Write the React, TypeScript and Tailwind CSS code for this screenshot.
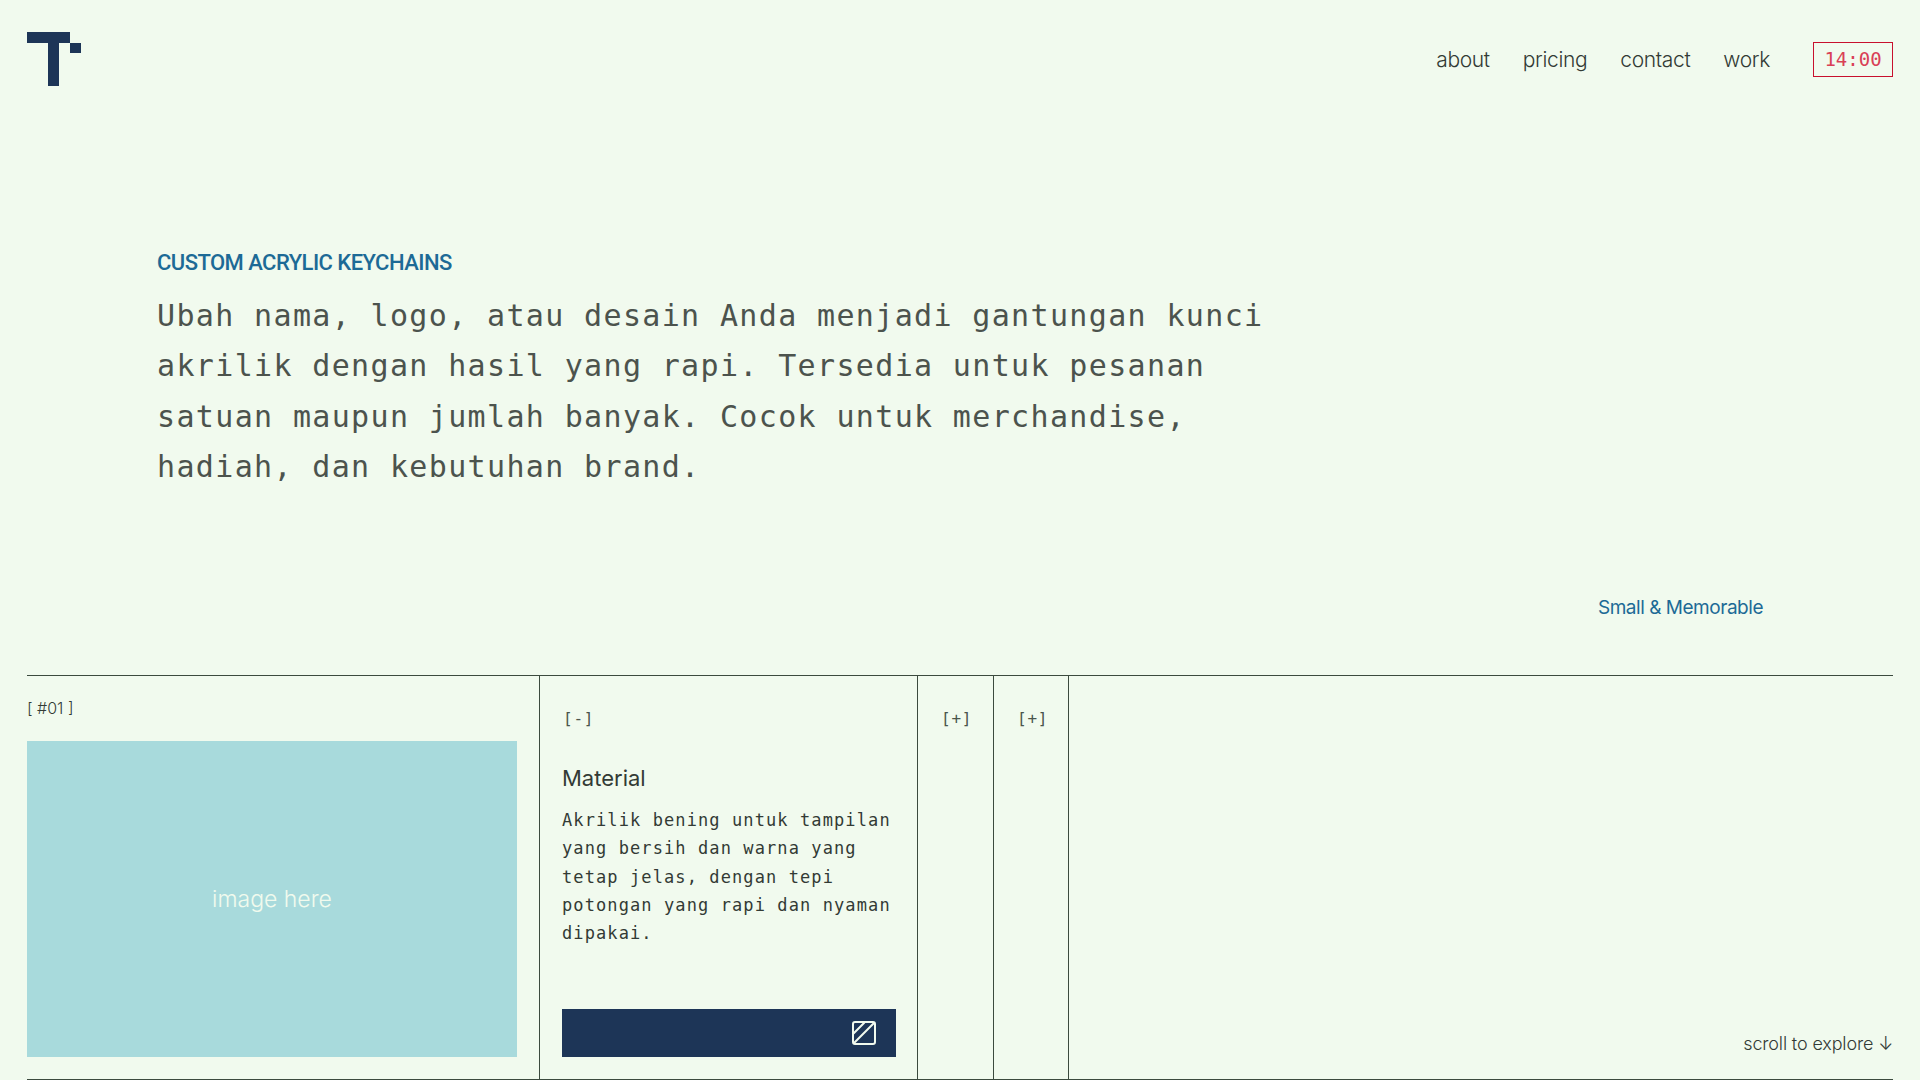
const navLinks = ["about", "pricing", "contact", "work"];

const sans = "font-['Inter',sans-serif]";
const mono = "font-['DejaVu_Sans_Mono',monospace]";

function Logo() {
  return (
    <svg width="54" height="54" viewBox="0 0 54 54" className="block">
      <path d="M0 0H43V11H32V54H21V11H0Z" fill="#1d3557" />
      <rect x="43" y="11" width="11" height="10" fill="#1d3557" />
    </svg>
  );
}

function SlashIcon() {
  return (
    <svg width="24" height="24" viewBox="0 0 24 24" fill="none" stroke="#f1faee" strokeWidth="2">
      <rect x="1" y="1" width="22" height="22" rx="2" />
      <path d="M1.5 12.5L12.5 1.5M1.5 22.5L22.5 1.5" />
    </svg>
  );
}

function CollapsedColumn({ width }: { width: string }) {
  return (
    <div className={`${width} shrink-0 border-r border-[#3c4a3e] pt-[32px] pl-[23px]`}>
      <span className={`${mono} block text-[16px] leading-[22px] font-light tracking-[0.8px] text-[#4a554c]`}>[+]</span>
    </div>
  );
}

export default function App() {
  return (
    <div className={`${sans} flex h-screen flex-col overflow-hidden bg-[#f1faee] px-[27px] text-[#333a35]`}>
      <header className="flex h-[119px] shrink-0 items-start justify-between pt-[32px]">
        <Logo />
        <nav className="flex items-center pt-[10px]">
          <ul className="flex gap-[33px] text-[21px] leading-[35px] font-light tracking-[-0.35px]">
            {navLinks.map((link) => (
              <li key={link}>{link}</li>
            ))}
          </ul>
          <div className={`${mono} ml-[43px] flex h-[35px] w-[80px] items-center justify-center border border-[#c8102e] text-[19px] font-light text-[#d94056]`}>
            14:00
          </div>
        </nav>
      </header>

      <section className="flex-1 pl-[130px]">
        <h1 className="mt-[130px] font-['Roboto',sans-serif] text-[22px] leading-[28px] font-medium tracking-[-0.55px] text-[#1d6a96]">
          CUSTOM ACRYLIC KEYCHAINS
        </h1>
        <p className={`${mono} mt-[14px] w-[1130px] text-[30px] leading-[50.4px] font-light tracking-[1.35px] text-[#4c534d]`}>
          Ubah nama, logo, atau desain Anda menjadi gantungan kunci
          <br />
          akrilik dengan hasil yang rapi. Tersedia untuk pesanan
          <br />
          satuan maupun jumlah banyak. Cocok untuk merchandise,
          <br />
          hadiah, dan kebutuhan brand.
        </p>
        <p className="mt-[101px] pr-[130px] text-right text-[19px] leading-[28px] tracking-[-0.47px] text-[#1d6a96]">
          Small &amp; Memorable
        </p>
      </section>

      <section className="flex h-[405px] shrink-0 border-y border-[#3c4a3e]">
        <div className="flex w-[513px] shrink-0 flex-col border-r border-[#3c4a3e] pr-[22px]">
          <span className="mt-[21px] mb-[22px] text-[16px] leading-[22px] font-light">[ #01 ]</span>
          <div className="flex h-[316px] w-[490px] items-center justify-center bg-[#a8dadc] text-[23px] font-light text-[#f1faee]">
            image here
          </div>
        </div>

        <div className="flex w-[378px] shrink-0 flex-col border-r border-[#3c4a3e] px-[22px] pt-[32px] pb-[22px]">
          <span className={`${mono} block pl-[1px] text-[16px] leading-[22px] font-light tracking-[0.8px] text-[#4a554c]`}>[-]</span>
          <h2 className="mt-[33px] text-[22px] leading-[30px] font-normal tracking-[0px]">Material</h2>
          <p className={`${mono} mt-[13px] text-[17px] leading-[28.3px] tracking-[1.1px] whitespace-nowrap`}>
            Akrilik bening untuk tampilan
            <br />
            yang bersih dan warna yang
            <br />
            tetap jelas, dengan tepi
            <br />
            potongan yang rapi dan nyaman
            <br />
            dipakai.
          </p>
          <div className="mt-auto flex h-[48px] w-[334px] items-center justify-end bg-[#1d3557] pr-[20px]">
            <SlashIcon />
          </div>
        </div>

        <CollapsedColumn width="w-[76px]" />
        <CollapsedColumn width="w-[75px]" />

        <div className="flex flex-1 items-end justify-end pb-[23px]">
          <span className="text-[18px] leading-[24px] font-light tracking-[-0.15px]">scroll to explore ↓</span>
        </div>
      </section>
    </div>
  );
}
